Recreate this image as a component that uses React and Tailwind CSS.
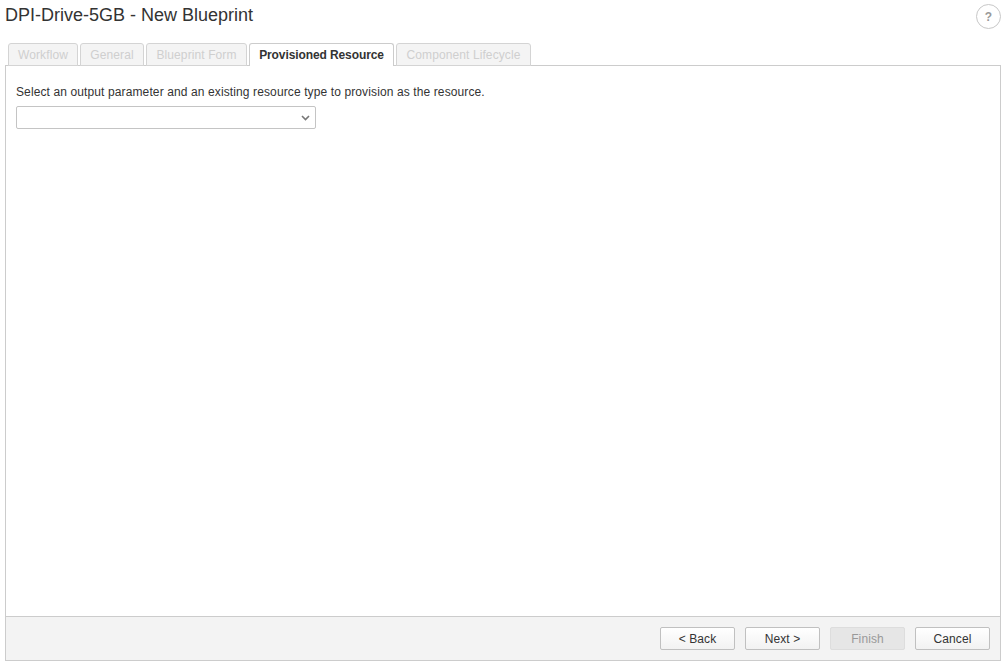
import React from 'react';

const tabs = [
  { label: 'Workflow', width: 'w-[70px]' },
  { label: 'General', width: 'w-[64px]' },
  { label: 'Blueprint Form', width: 'w-[101px]' },
  { label: 'Provisioned Resource', width: 'w-[145px]', active: true },
  { label: 'Component Lifecycle', width: 'w-[135px]' },
];

const buttons = [
  { label: '< Back' },
  { label: 'Next >' },
  { label: 'Finish', disabled: true },
  { label: 'Cancel' },
];

const App = () => {
  return (
    <div className="flex h-[663px] w-[1005px] flex-col overflow-hidden bg-white pl-[5px] pr-[4px] pb-[2px] font-['Liberation_Sans',Arial,sans-serif] text-[12px] text-[#333]">
      {/* Header */}
      <div className="flex h-[43px] shrink-0 items-start justify-between">
        <h1 className="mt-[4px] text-[18px] leading-[22px] font-normal text-[#333]">DPI-Drive-5GB - New Blueprint</h1>
        <div className="mt-[4px] flex h-[25px] w-[25px] items-center justify-center rounded-full border border-[#c8c8c8] text-[12px] font-bold text-[#999]">?</div>
      </div>

      {/* Tabs */}
      <div className="relative z-10 -mb-px flex h-[23px] shrink-0 gap-[2px] pl-[3px]">
        {tabs.map((tab) =>
          tab.active ? (
            <div
              key={tab.label}
              className={`${tab.width} flex items-center justify-center rounded-t-[3px] border border-b-0 border-[#ccc] bg-white font-bold tracking-[-0.1px] text-[#333]`}
            >
              {tab.label}
            </div>
          ) : (
            <div
              key={tab.label}
              className={`${tab.width} flex items-center justify-center rounded-t-[3px] border border-[#d4d4d4] bg-[#f4f4f4] tracking-[0.1px] text-[#cfcfcf]`}
            >
              {tab.label}
            </div>
          )
        )}
      </div>

      {/* Panel */}
      <div className="flex min-h-0 flex-1 flex-col border border-[#ccc]">
        <div className="flex-1 px-[10px] pt-[19px]">
          <p className="leading-[14px] tracking-[0.115px] text-[#333]">Select an output parameter and an existing resource type to provision as the resource.</p>
          <div className="mt-[7px] flex h-[23px] w-[300px] items-center justify-end rounded-[2px] border border-[#c4c4c4] bg-white pr-[5px]">
            <svg width="9" height="6" viewBox="0 0 9 6" fill="none">
              <path d="M1 1l3.5 3.5L8 1" stroke="#777" strokeWidth="1.6" />
            </svg>
          </div>
        </div>

        {/* Footer */}
        <div className="flex h-[44px] shrink-0 items-center justify-end gap-[10px] border-t border-[#ccc] bg-[#f3f3f3] pr-[10px]">
          {buttons.map((btn) => (
            <button
              key={btn.label}
              disabled={btn.disabled}
              className={
                btn.disabled
                  ? 'h-[23px] w-[75px] rounded-[2px] border border-[#ddd] bg-[#e6e6e6] text-[12px] tracking-[0.1px] text-[#999]'
                  : 'h-[23px] w-[75px] rounded-[2px] border border-[#c0c0c0] bg-gradient-to-b from-white to-[#f2f2f2] text-[12px] tracking-[0.1px] text-[#333]'
              }
            >
              {btn.label}
            </button>
          ))}
        </div>
      </div>
    </div>
  );
};

export default App;
